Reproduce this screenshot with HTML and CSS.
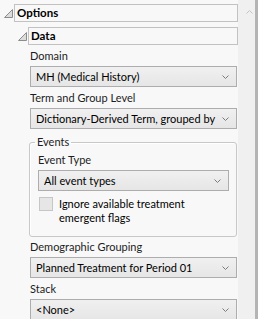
FILE: index.html
```html
<!DOCTYPE html>
<html lang="en">
<head>
  <meta charset="UTF-8" />
  <title>Options</title>
  <link rel="stylesheet" href="styles.css">
</head>
<body>
  <div class="panel">
    <div class="content">
      <div class="outline-head">
        <svg class="tri" width="9" height="9" viewBox="0 0 9 9"><polygon points="8.5,0.5 8.5,8.5 0.5,8.5" /></svg>
        <div class="title">Options</div>
      </div>

      <div class="section">
        <div class="outline-head">
          <svg class="tri" width="9" height="9" viewBox="0 0 9 9"><polygon points="8.5,0.5 8.5,8.5 0.5,8.5" /></svg>
          <div class="title">Data</div>
        </div>

        <div class="body">
          <div class="label">Domain</div>
          <div class="combo"><span>MH (Medical History)</span><svg class="chev" width="7" height="4" viewBox="0 0 7 4"><polyline points="0.5,0.5 3.5,3.5 6.5,0.5" /></svg></div>

          <div class="label">Term and Group Level</div>
          <div class="combo"><span>Dictionary-Derived Term, grouped by Body System</span><svg class="chev" width="7" height="4" viewBox="0 0 7 4"><polyline points="0.5,0.5 3.5,3.5 6.5,0.5" /></svg></div>

          <fieldset class="group">
            <legend>Events</legend>
            <div class="label">Event Type</div>
            <div class="combo"><span>All event types</span><svg class="chev" width="7" height="4" viewBox="0 0 7 4"><polyline points="0.5,0.5 3.5,3.5 6.5,0.5" /></svg></div>
            <label class="check">
              <span class="box"></span>
              <span>Ignore available treatment emergent flags</span>
            </label>
          </fieldset>

          <div class="label">Demographic Grouping</div>
          <div class="combo"><span>Planned Treatment for Period 01</span><svg class="chev" width="7" height="4" viewBox="0 0 7 4"><polyline points="0.5,0.5 3.5,3.5 6.5,0.5" /></svg></div>

          <div class="label">Stack</div>
          <div class="combo"><span>&lt;None&gt;</span><svg class="chev" width="7" height="4" viewBox="0 0 7 4"><polyline points="0.5,0.5 3.5,3.5 6.5,0.5" /></svg></div>
        </div>
      </div>
    </div>

    <div class="scrollbar">
      <svg class="up" width="7" height="4" viewBox="0 0 7 4"><polyline points="0.5,3.5 3.5,0.5 6.5,3.5" /></svg>
      <div class="thumb"></div>
    </div>
  </div>
</body>
</html>
```

FILE: styles.css
```css
* {
  box-sizing: border-box;
}

body {
  margin: 0;
  background-color: #f8f8f8;
  font-family: Lato, 'Open Sans', sans-serif;
  font-size: 11px;
  color: #1c1c24;
}

.panel {
  display: flex;
  width: 258px;
  height: 319px;
  overflow: hidden;
}

.content {
  width: 238px;
  flex: none;
  padding: 4px 0 0 4px;
}

.outline-head {
  display: flex;
  align-items: center;
  gap: 1px;
}

.tri polygon {
  fill: #dcdcdc;
  stroke: #8c8c8c;
  stroke-width: 1;
}

.title {
  flex: 1;
  height: 18px;
  line-height: 16px;
  border: 1px solid #c2c2c2;
  padding-left: 2px;
  font-size: 11.5px;
  font-weight: bold;
  color: #000;
}

.section {
  margin: 5px 0 0 14px;
}

.body {
  padding-left: 12px;
  padding-right: 1px;
}

.label {
  height: 21px;
  line-height: 21px;
  white-space: nowrap;
}

.combo {
  display: flex;
  align-items: center;
  height: 21px;
  border: 1px solid #adadad;
  background: linear-gradient(#f0f0f0, #e6e6e6);
  padding: 0 7px 0 5px;
  color: #000;
  white-space: nowrap;
}

.combo span {
  flex: 1;
  overflow: hidden;
}

.chev {
  flex: none;
  margin-left: 6px;
}

.chev polyline, .up polyline {
  fill: none;
  stroke: #7c7c7c;
  stroke-width: 1;
}

.group {
  margin: 5px 0 0 -1px;
  padding: 0 7px 11px 8px;
  border: 1px solid #c8c8c8;
  border-radius: 3px;
  box-shadow: inset 1px 1px 0 #fff;
}

.group legend {
  padding: 0 2px;
  margin-left: -3px;
  line-height: 16px;
}

.group .label {
  height: 20px;
  line-height: 20px;
}

.check {
  display: flex;
  gap: 6px;
  margin-top: 6px;
  line-height: 14px;
  color: #000;
}

.check .box {
  flex: none;
  width: 14px;
  height: 14px;
  border: 1px solid #c6c6c6;
  background-color: #e6e6e6;
  margin-left: 1px;
}

.group + .label {
  height: 20px;
  line-height: 20px;
}

.scrollbar {
  flex: 1;
  display: flex;
  background-color: #f0f0f0;
}

.up {
  margin: 10px 0 0 8px;
}

.up polyline {
  stroke: #c4c4c4;
}

.thumb {
  margin-left: auto;
  width: 3px;
  background-color: #b4b4b4;
}
```
